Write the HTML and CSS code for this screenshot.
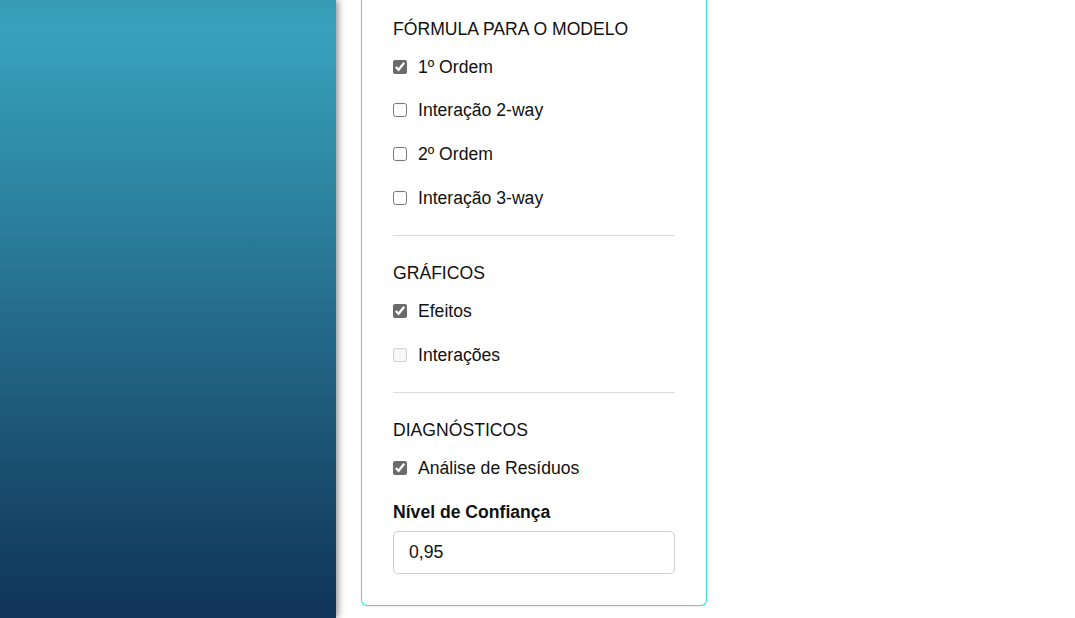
FILE: index.html
```html
<!DOCTYPE html>
<html lang="pt">
<head>
<meta charset="utf-8">
<title>Modelo</title>
<link rel="stylesheet" href="styles.css">
</head>
<body>
<div class="layout">
  <aside class="sidebar"></aside>
  <main class="main">
    <div class="panel">
      <section class="group">
        <h3 class="group-title">FÓRMULA PARA O MODELO</h3>
        <label class="check"><input type="checkbox" checked><span>1º Ordem</span></label>
        <label class="check"><input type="checkbox"><span>Interação 2-way</span></label>
        <label class="check"><input type="checkbox"><span>2º Ordem</span></label>
        <label class="check"><input type="checkbox"><span>Interação 3-way</span></label>
      </section>
      <hr class="divider">
      <section class="group">
        <h3 class="group-title">GRÁFICOS</h3>
        <label class="check"><input type="checkbox" checked><span>Efeitos</span></label>
        <label class="check"><input type="checkbox" disabled><span>Interações</span></label>
      </section>
      <hr class="divider">
      <section class="group">
        <h3 class="group-title">DIAGNÓSTICOS</h3>
        <label class="check"><input type="checkbox" checked><span>Análise de Resíduos</span></label>
        <div class="field">
          <label class="field-label" for="conf">Nível de Confiança</label>
          <input id="conf" class="field-input" type="text" value="0,95">
        </div>
      </section>
    </div>
  </main>
</div>
</body>
</html>
```

FILE: styles.css
```css
* { box-sizing: border-box; }
html, body { margin: 0; padding: 0; background: #fff; }
body {
  font-family: "Liberation Sans", Arial, sans-serif;
  font-size: 17.6px;
  line-height: 20px;
  color: #111;
  overflow: hidden;
}
.layout {
  display: flex;
  height: 618px;
}
.sidebar {
  width: 336px;
  flex: none;
  height: 100%;
  background: linear-gradient(to bottom, #369cb5 0px, #38a2bd 30px, #2d85a0 190px, #24698a 330px, #1b5272 450px, #10345a 618px);
  box-shadow: 2px 0 7px rgba(0, 0, 0, 0.45);
  position: relative;
  z-index: 1;
}
.main {
  flex: 1;
  padding-left: 25px;
}
.panel {
  width: 346px;
  border: 1px solid #2ee8cf;
  border-top: 0;
  border-radius: 0 0 6px 6px;
  padding: 19px 31px 31px 31px;
  box-shadow: 0 1px 2px rgba(0, 0, 0, 0.08);
}
.group {
  display: flex;
  flex-direction: column;
}
.group-title {
  margin: 0 0 17.5px;
  font-size: 17.6px;
  font-weight: normal;
  line-height: 20px;
}
.check {
  display: flex;
  align-items: center;
  height: 20px;
  margin-bottom: 23.75px;
}
.group .check:last-of-type { margin-bottom: 0; }
.check input {
  width: 14px;
  height: 14px;
  margin: 0 11px 0 0;
  accent-color: #6b6b6b;
}
.divider {
  border: 0;
  border-top: 1px solid #dcdcdc;
  margin: 27.5px 0 27px;
}
.field {
  display: flex;
  flex-direction: column;
  margin-top: 24px;
}
.field-label {
  font-weight: bold;
  margin-bottom: 9px;
}
.field-input {
  width: 282px;
  height: 43px;
  border: 1px solid #cfcfcf;
  border-radius: 5px;
  padding: 0 15px;
  font-family: "Liberation Sans", Arial, sans-serif;
  font-size: 17.6px;
  color: #111;
  background: #fff;
}
```
